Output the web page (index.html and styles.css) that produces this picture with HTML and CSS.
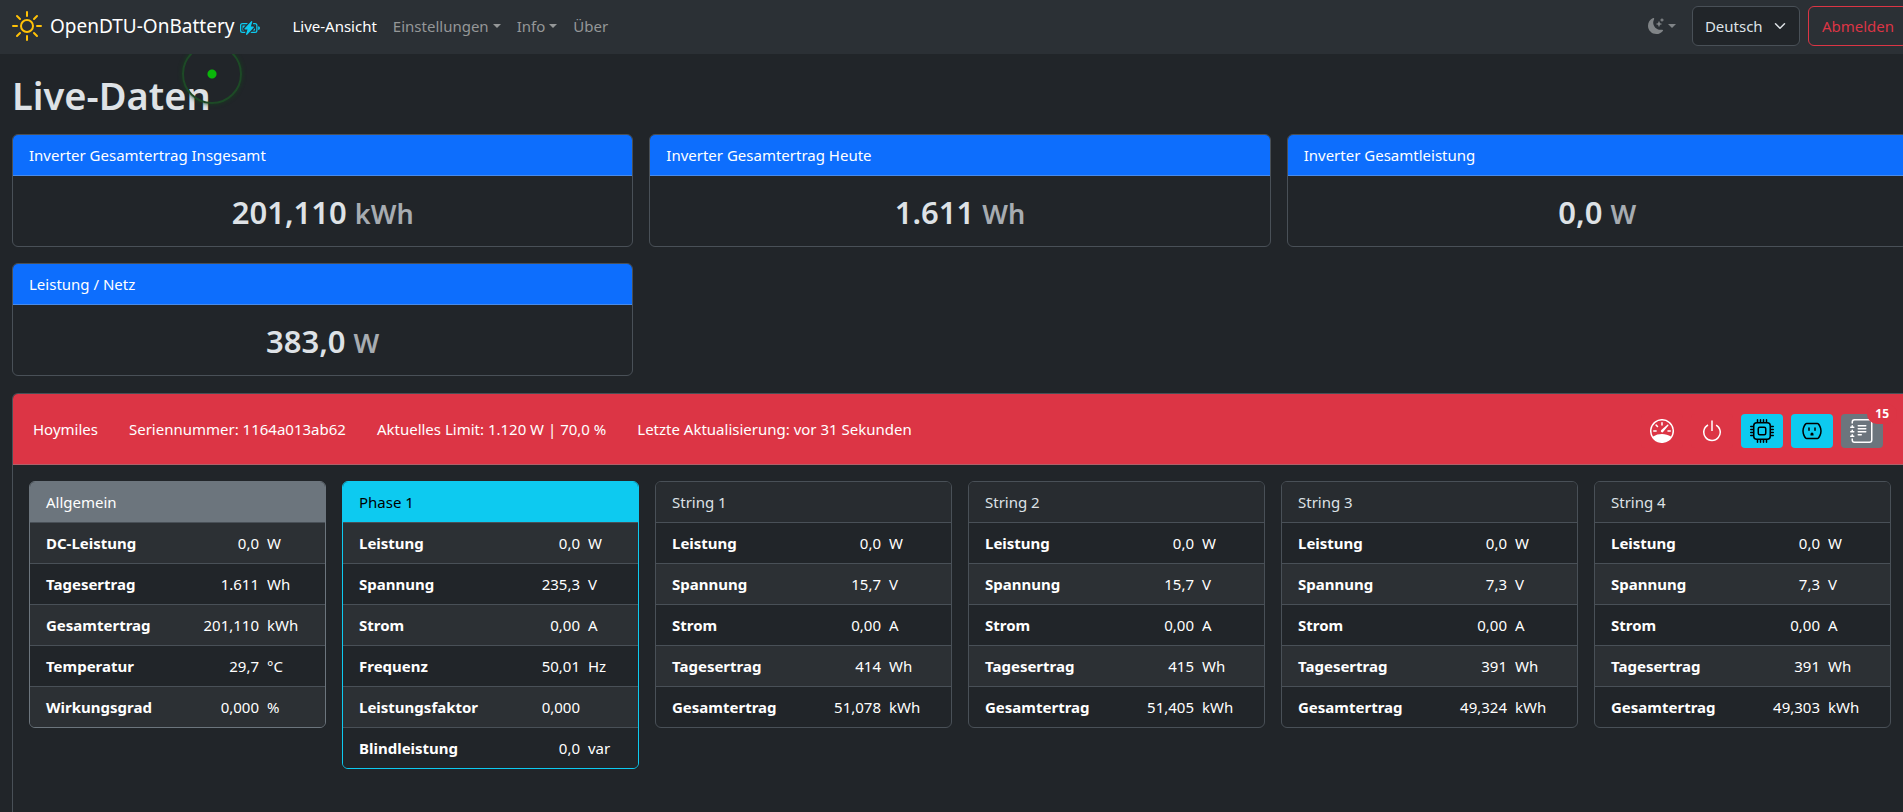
FILE: index.html
```html
<!DOCTYPE html>
<html lang="de">
<head>
  <meta charset="UTF-8">
  <title>OpenDTU-OnBattery</title>
  <meta name="viewport" content="width=device-width, initial-scale=1">
  <link rel="stylesheet" href="styles.css">
</head>
<body>
  <div class="page">
    <nav class="navbar">
      <a class="brand" href="#">
        <svg class="sun" viewBox="0 0 30 30" fill="none" stroke="currentColor" stroke-width="2" stroke-linecap="round">
          <circle cx="15" cy="15" r="6"/>
          <path d="M15 1v4M15 25v4M1 15h4M25 15h4M5 5l3 3M22 22l3 3M5 25l3-3M22 8l3-3"/>
        </svg>
        <span>OpenDTU-OnBattery</span>
        <svg class="battery" viewBox="0 0 16 16" fill="currentColor">
          <path d="M9.585 2.568a.5.5 0 0 1 .226.58L8.677 6.832h1.99a.5.5 0 0 1 .364.843l-5.334 5.667a.5.5 0 0 1-.842-.49L5.99 9.167H4a.5.5 0 0 1-.364-.843l5.333-5.667a.5.5 0 0 1 .616-.09z"/>
          <path d="M2 4h4.332l-.94 1H2a1 1 0 0 0-1 1v4a1 1 0 0 0 1 1h2.38l-.308 1H2a2 2 0 0 1-2-2V6a2 2 0 0 1 2-2"/>
          <path d="M2 6h2.45L2.908 7.639A1.5 1.5 0 0 0 3.313 10H2zm8.595-2-.308 1H12a1 1 0 0 1 1 1v4a1 1 0 0 1-1 1H9.276l-.942 1H12a2 2 0 0 0 2-2V6a2 2 0 0 0-2-2z"/>
          <path d="M12 10h-1.783l1.542-1.639q.146-.156.241-.34zm0-3.354V6h-.646a1.5 1.5 0 0 1 .646.646M16 8a1.5 1.5 0 0 1-1.5 1.5v-3A1.5 1.5 0 0 1 16 8"/>
        </svg>
      </a>
      <ul class="menu">
        <li><a class="active" href="#">Live-Ansicht</a></li>
        <li><a class="dropdown" href="#">Einstellungen</a></li>
        <li><a class="dropdown" href="#">Info</a></li>
        <li><a href="#">Über</a></li>
      </ul>
      <button class="theme dropdown" type="button" aria-label="Farbschema">
        <svg viewBox="0 0 16 16" fill="currentColor">
          <path d="M6 .278a.77.77 0 0 1 .08.858 7.2 7.2 0 0 0-.878 3.46c0 4.021 3.278 7.277 7.318 7.277q.792-.001 1.533-.16a.79.79 0 0 1 .81.316.73.73 0 0 1-.031.893A8.35 8.35 0 0 1 8.344 16C3.734 16 0 12.286 0 7.71 0 4.266 2.114 1.312 5.124.06A.75.75 0 0 1 6 .278"/>
          <path d="M10.794 3.148a.217.217 0 0 1 .412 0l.387 1.162c.173.518.579.924 1.097 1.097l1.162.387a.217.217 0 0 1 0 .412l-1.162.387a1.73 1.73 0 0 0-1.097 1.097l-.387 1.162a.217.217 0 0 1-.412 0l-.387-1.162A1.73 1.73 0 0 0 9.31 6.593l-1.162-.387a.217.217 0 0 1 0-.412l1.162-.387a1.73 1.73 0 0 0 1.097-1.097zM13.863.099a.145.145 0 0 1 .274 0l.258.774c.115.346.386.617.732.732l.774.258a.145.145 0 0 1 0 .274l-.774.258a1.16 1.16 0 0 0-.732.732l-.258.774a.145.145 0 0 1-.274 0l-.258-.774a1.16 1.16 0 0 0-.732-.732l-.774-.258a.145.145 0 0 1 0-.274l.774-.258c.346-.115.617-.386.732-.732z"/>
        </svg>
      </button>
      <div class="locale">
        <select aria-label="Sprache">
          <option>Deutsch</option>
          <option>English</option>
          <option>Français</option>
        </select>
        <svg class="chevron" viewBox="0 0 16 16" fill="none" stroke="currentColor" stroke-width="2" stroke-linecap="round" stroke-linejoin="round"><path d="m2 5 6 6 6-6"/></svg>
      </div>
      <button class="logout" type="button">Abmelden</button>
    </nav>

    <main class="content">
      <h1><span class="title">Live-Daten<span class="pulse"></span></span></h1>

      <section class="totals">
        <div class="card">
          <div class="card-header primary">Inverter Gesamtertrag Insgesamt</div>
          <h2>201,110 <small>kWh</small></h2>
        </div>
        <div class="card">
          <div class="card-header primary">Inverter Gesamtertrag Heute</div>
          <h2>1.611 <small>Wh</small></h2>
        </div>
        <div class="card">
          <div class="card-header primary">Inverter Gesamtleistung</div>
          <h2>0,0 <small>W</small></h2>
        </div>
        <div class="card">
          <div class="card-header primary">Leistung / Netz</div>
          <h2>383,0 <small>W</small></h2>
        </div>
      </section>

      <section class="card inverter">
        <div class="inverter-header">
          <div class="info">
            <span>Hoymiles</span>
            <span>Seriennummer: 1164a013ab62</span>
            <span>Aktuelles Limit: 1.120 W | 70,0 %</span>
            <span>Letzte Aktualisierung: vor 31 Sekunden</span>
          </div>
          <div class="toolbar">
            <button class="btn danger" type="button" aria-label="Limit">
              <svg viewBox="0 0 16 16" fill="currentColor">
                <path d="M8 2a.5.5 0 0 1 .5.5V4a.5.5 0 0 1-1 0V2.5A.5.5 0 0 1 8 2M3.732 3.732a.5.5 0 0 1 .707 0l.915.914a.5.5 0 1 1-.708.708l-.914-.915a.5.5 0 0 1 0-.707M2 8a.5.5 0 0 1 .5-.5h1.586a.5.5 0 0 1 0 1H2.5A.5.5 0 0 1 2 8m9.5 0a.5.5 0 0 1 .5-.5h1.5a.5.5 0 0 1 0 1H12a.5.5 0 0 1-.5-.5m.754-4.246a.39.39 0 0 0-.527-.02L7.547 7.31A.91.91 0 1 0 8.85 8.569l3.434-4.297a.39.39 0 0 0-.029-.518z"/>
                <path fill-rule="evenodd" d="M6.664 15.889A8 8 0 1 1 9.336.11a8 8 0 0 1-2.672 15.78zm-4.665-4.283A11.95 11.95 0 0 1 8 10c2.186 0 4.236.585 6.001 1.606a7 7 0 1 0-12.002 0"/>
              </svg>
            </button>
            <button class="btn danger" type="button" aria-label="Ein/Aus">
              <svg viewBox="0 0 16 16" fill="currentColor">
                <path d="M7.5 1v7h1V1z"/>
                <path d="M3 8.812a5 5 0 0 1 2.578-4.375l-.485-.874A6 6 0 1 0 11 3.616l-.501.865A5 5 0 1 1 3 8.812"/>
              </svg>
            </button>
            <button class="btn info-btn" type="button" aria-label="Geräteinfo">
              <svg viewBox="0 0 16 16" fill="currentColor">
                <path d="M5 0a.5.5 0 0 1 .5.5V2h1V.5a.5.5 0 0 1 1 0V2h1V.5a.5.5 0 0 1 1 0V2h1V.5a.5.5 0 0 1 1 0V2A2.5 2.5 0 0 1 14 4.5h1.5a.5.5 0 0 1 0 1H14v1h1.5a.5.5 0 0 1 0 1H14v1h1.5a.5.5 0 0 1 0 1H14v1h1.5a.5.5 0 0 1 0 1H14a2.5 2.5 0 0 1-2.5 2.5v1.5a.5.5 0 0 1-1 0V14h-1v1.5a.5.5 0 0 1-1 0V14h-1v1.5a.5.5 0 0 1-1 0V14h-1v1.5a.5.5 0 0 1-1 0V14A2.5 2.5 0 0 1 2 11.5H.5a.5.5 0 0 1 0-1H2v-1H.5a.5.5 0 0 1 0-1H2v-1H.5a.5.5 0 0 1 0-1H2v-1H.5a.5.5 0 0 1 0-1H2A2.5 2.5 0 0 1 4.5 2V.5A.5.5 0 0 1 5 0m-.5 3A1.5 1.5 0 0 0 3 4.5v7A1.5 1.5 0 0 0 4.5 13h7a1.5 1.5 0 0 0 1.5-1.5v-7A1.5 1.5 0 0 0 11.5 3zM5 6.5A1.5 1.5 0 0 1 6.5 5h3A1.5 1.5 0 0 1 11 6.5v3A1.5 1.5 0 0 1 9.5 11h-3A1.5 1.5 0 0 1 5 9.5zM6.5 6a.5.5 0 0 0-.5.5v3a.5.5 0 0 0 .5.5h3a.5.5 0 0 0 .5-.5v-3a.5.5 0 0 0-.5-.5z"/>
              </svg>
            </button>
            <button class="btn info-btn" type="button" aria-label="Netzprofil">
              <svg viewBox="0 0 16 16" fill="currentColor">
                <path d="M3.34 2.994c.275-.338.68-.494 1.074-.494h7.172c.393 0 .798.156 1.074.494.578.708 1.84 2.534 1.84 5.006s-1.262 4.297-1.84 5.006c-.276.338-.68.494-1.074.494H4.414c-.394 0-.799-.156-1.074-.494C2.762 12.297 1.5 10.472 1.5 8s1.262-4.297 1.84-5.006m1.074.506a.38.38 0 0 0-.299.126C3.599 4.259 2.5 5.863 2.5 8s1.099 3.74 1.615 4.374c.06.073.163.126.3.126h7.17c.137 0 .24-.053.3-.126.516-.633 1.615-2.237 1.615-4.374s-1.099-3.74-1.615-4.374a.38.38 0 0 0-.3-.126h-7.17z"/>
                <path d="M6 5.5a.5.5 0 0 1 .5.5v1.5a.5.5 0 0 1-1 0V6a.5.5 0 0 1 .5-.5m4 0a.5.5 0 0 1 .5.5v1.5a.5.5 0 0 1-1 0V6a.5.5 0 0 1 .5-.5M7 10v1h2v-1a1 1 0 0 0-2 0"/>
              </svg>
            </button>
            <button class="btn secondary" type="button" aria-label="Ereignisse">
              <svg viewBox="0 0 16 16" fill="currentColor">
                <path d="M5 10.5a.5.5 0 0 1 .5-.5h2a.5.5 0 0 1 0 1h-2a.5.5 0 0 1-.5-.5m0-2a.5.5 0 0 1 .5-.5h5a.5.5 0 0 1 0 1h-5a.5.5 0 0 1-.5-.5m0-2a.5.5 0 0 1 .5-.5h5a.5.5 0 0 1 0 1h-5a.5.5 0 0 1-.5-.5m0-2a.5.5 0 0 1 .5-.5h5a.5.5 0 0 1 0 1h-5a.5.5 0 0 1-.5-.5"/>
                <path d="M3 0h10a2 2 0 0 1 2 2v12a2 2 0 0 1-2 2H3a2 2 0 0 1-2-2v-1h1v1a1 1 0 0 0 1 1h10a1 1 0 0 0 1-1V2a1 1 0 0 0-1-1H3a1 1 0 0 0-1 1v1H1V2a2 2 0 0 1 2-2"/>
                <path d="M1 5v-.5a.5.5 0 0 1 1 0V5h.5a.5.5 0 0 1 0 1h-2a.5.5 0 0 1 0-1zm0 3v-.5a.5.5 0 0 1 1 0V8h.5a.5.5 0 0 1 0 1h-2a.5.5 0 0 1 0-1zm0 3v-.5a.5.5 0 0 1 1 0v.5h.5a.5.5 0 0 1 0 1h-2a.5.5 0 0 1 0-1z"/>
              </svg>
              <span class="badge">15</span>
            </button>
          </div>
        </div>

        <div class="channels">
          <div class="card general">
            <div class="card-header">Allgemein</div>
            <table>
              <tr><th scope="row">DC-Leistung</th><td class="value">0,0</td><td class="unit">W</td></tr>
              <tr><th scope="row">Tagesertrag</th><td class="value">1.611</td><td class="unit">Wh</td></tr>
              <tr><th scope="row">Gesamtertrag</th><td class="value">201,110</td><td class="unit">kWh</td></tr>
              <tr><th scope="row">Temperatur</th><td class="value">29,7</td><td class="unit">°C</td></tr>
              <tr><th scope="row">Wirkungsgrad</th><td class="value">0,000</td><td class="unit">%</td></tr>
            </table>
          </div>
          <div class="card phase">
            <div class="card-header">Phase 1</div>
            <table>
              <tr><th scope="row">Leistung</th><td class="value">0,0</td><td class="unit">W</td></tr>
              <tr><th scope="row">Spannung</th><td class="value">235,3</td><td class="unit">V</td></tr>
              <tr><th scope="row">Strom</th><td class="value">0,00</td><td class="unit">A</td></tr>
              <tr><th scope="row">Frequenz</th><td class="value">50,01</td><td class="unit">Hz</td></tr>
              <tr><th scope="row">Leistungsfaktor</th><td class="value">0,000</td><td class="unit"></td></tr>
              <tr><th scope="row">Blindleistung</th><td class="value">0,0</td><td class="unit">var</td></tr>
            </table>
          </div>
          <div class="card string">
            <div class="card-header">String 1</div>
            <table>
              <tr><th scope="row">Leistung</th><td class="value">0,0</td><td class="unit">W</td></tr>
              <tr><th scope="row">Spannung</th><td class="value">15,7</td><td class="unit">V</td></tr>
              <tr><th scope="row">Strom</th><td class="value">0,00</td><td class="unit">A</td></tr>
              <tr><th scope="row">Tagesertrag</th><td class="value">414</td><td class="unit">Wh</td></tr>
              <tr><th scope="row">Gesamtertrag</th><td class="value">51,078</td><td class="unit">kWh</td></tr>
            </table>
          </div>
          <div class="card string">
            <div class="card-header">String 2</div>
            <table>
              <tr><th scope="row">Leistung</th><td class="value">0,0</td><td class="unit">W</td></tr>
              <tr><th scope="row">Spannung</th><td class="value">15,7</td><td class="unit">V</td></tr>
              <tr><th scope="row">Strom</th><td class="value">0,00</td><td class="unit">A</td></tr>
              <tr><th scope="row">Tagesertrag</th><td class="value">415</td><td class="unit">Wh</td></tr>
              <tr><th scope="row">Gesamtertrag</th><td class="value">51,405</td><td class="unit">kWh</td></tr>
            </table>
          </div>
          <div class="card string">
            <div class="card-header">String 3</div>
            <table>
              <tr><th scope="row">Leistung</th><td class="value">0,0</td><td class="unit">W</td></tr>
              <tr><th scope="row">Spannung</th><td class="value">7,3</td><td class="unit">V</td></tr>
              <tr><th scope="row">Strom</th><td class="value">0,00</td><td class="unit">A</td></tr>
              <tr><th scope="row">Tagesertrag</th><td class="value">391</td><td class="unit">Wh</td></tr>
              <tr><th scope="row">Gesamtertrag</th><td class="value">49,324</td><td class="unit">kWh</td></tr>
            </table>
          </div>
          <div class="card string">
            <div class="card-header">String 4</div>
            <table>
              <tr><th scope="row">Leistung</th><td class="value">0,0</td><td class="unit">W</td></tr>
              <tr><th scope="row">Spannung</th><td class="value">7,3</td><td class="unit">V</td></tr>
              <tr><th scope="row">Strom</th><td class="value">0,00</td><td class="unit">A</td></tr>
              <tr><th scope="row">Tagesertrag</th><td class="value">391</td><td class="unit">Wh</td></tr>
              <tr><th scope="row">Gesamtertrag</th><td class="value">49,303</td><td class="unit">kWh</td></tr>
            </table>
          </div>
        </div>
      </section>
    </main>
  </div>
</body>
</html>
```
FILE: styles.css
```css
* { box-sizing: border-box; }
html { background: #212529; overflow: hidden; }
body { margin: 0; min-height: 100vh; background: #212529; color: #dee2e6; font: 15px/24px "Noto Sans", "Open Sans", sans-serif; }
h1, h2, ul { margin: 0; padding: 0; }
h1, h2 { font-weight: 600; }
a { color: inherit; text-decoration: none; }
button, select { font: inherit; cursor: pointer; }

.page { display: flex; flex-direction: column; min-height: 100vh; margin-right: -17px; }

.navbar { display: flex; align-items: center; padding: 6px 12px 8px; background: #2b3035; }
.brand { display: flex; align-items: center; color: #fff; font-size: 19px; }
.sun { width: 30px; height: 30px; margin-right: 8px; color: #ffc107; }
.battery { width: 20px; height: 20px; margin: 4px 0 0 6px; color: #0dcaf0; }
.menu { display: flex; gap: 16px; margin-left: 32px; list-style: none; color: #959798; }
.menu .active { color: #fff; }
.dropdown::after { content: ""; display: inline-block; margin-left: 4px; vertical-align: 4px; border: 4px solid transparent; border-top-color: currentColor; border-bottom: 0; }
.theme { display: flex; align-items: center; margin-left: auto; padding: 8px; border: 0; background: none; color: #808487; }
.theme svg { width: 16px; height: 16px; }
.locale { position: relative; margin: 0 8px; }
.locale select { display: block; appearance: none; width: 108px; height: 40px; padding: 0 12px; border: 1px solid #495057; border-radius: 6px; background: #212529; color: #dee2e6; }
.chevron { position: absolute; right: 14px; top: 14px; width: 12px; height: 12px; pointer-events: none; }
.logout { height: 40px; padding: 0 13px; border: 1px solid #dc3545; border-radius: 6px; background: none; color: #dc3545; }

.content { display: flex; flex-direction: column; gap: 16px; flex: 1; padding: 18px 12px 0; }
h1 { font-size: 38px; line-height: 46px; }
.title { position: relative; display: inline-block; }
.pulse { position: absolute; right: -31px; top: -28px; width: 60px; height: 60px; border: 2px solid #1d4a26; border-radius: 50%; background: radial-gradient(circle, #0ab60a 4px, transparent 5px); box-shadow: 0 0 4px #17401f; clip-path: inset(10px -6px -6px -6px); }

.totals { display: grid; grid-template-columns: repeat(3, 1fr); gap: 16px; padding-bottom: 1px; }
.card { border: 1px solid #495057; border-radius: 6px; overflow: hidden; }
.card-header { padding: 8px 16px; border-bottom: 1px solid #495057; background: #282c30; }
.primary { background: #0d6efd; color: #fff; border-color: #4a8be8; }
h2 { padding: 17px 16px 15px; font-size: 31px; line-height: 38px; text-align: center; }
h2 small { font-size: 27px; line-height: 1; color: #a7acb1; }

.inverter { flex: 1; border-bottom: 0; border-bottom-left-radius: 0; }
.inverter-header { display: flex; justify-content: space-between; align-items: center; padding: 16px 24px 16px 20px; border-bottom: 1px solid #b0606a; background: #dc3545; color: #fff; }
.info { display: flex; gap: 31px; }
.toolbar { display: flex; gap: 8px; padding-top: 4px; }
.btn { position: relative; display: flex; align-items: center; justify-content: center; width: 42px; height: 34px; padding: 0; border: 0; border-radius: 4px; }
.btn svg { width: 24px; height: 24px; }
.danger { background: #dc3545; color: #fff; }
.info-btn { background: #0dcaf0; color: #000; }
.secondary { background: #6c757d; color: #fff; }
.badge { position: absolute; right: -14px; top: -10px; padding: 4px 8px; border-radius: 10px; background: #dc3545; font-size: 12px; line-height: 12px; font-weight: 700; }

.channels { display: grid; grid-template-columns: repeat(6, 1fr); align-items: start; gap: 16px; padding: 16px; }
.general { border-color: #6c757d; }
.general .card-header { background: #6c757d; color: #fff; }
.phase { border-color: #0dcaf0; }
.phase .card-header { background: #0dcaf0; color: #000; }
table { width: 100%; border-collapse: collapse; color: #fff; }
th, td { padding: 8px 0; border-bottom: 1px solid #495057; text-align: left; }
tr:last-child > * { border-bottom: 0; }
tr:nth-child(even) { background: #2c3034; }
.general tr, .phase tr { background: #2c3034; }
.general tr:nth-child(even), .phase tr:nth-child(even) { background: #212529; }
th { padding-left: 16px; font-weight: 700; }
.value { text-align: right; }
.unit { width: 70px; padding-left: 8px; }
.general .unit { width: 66px; }
.phase .unit { width: 58px; }
```
